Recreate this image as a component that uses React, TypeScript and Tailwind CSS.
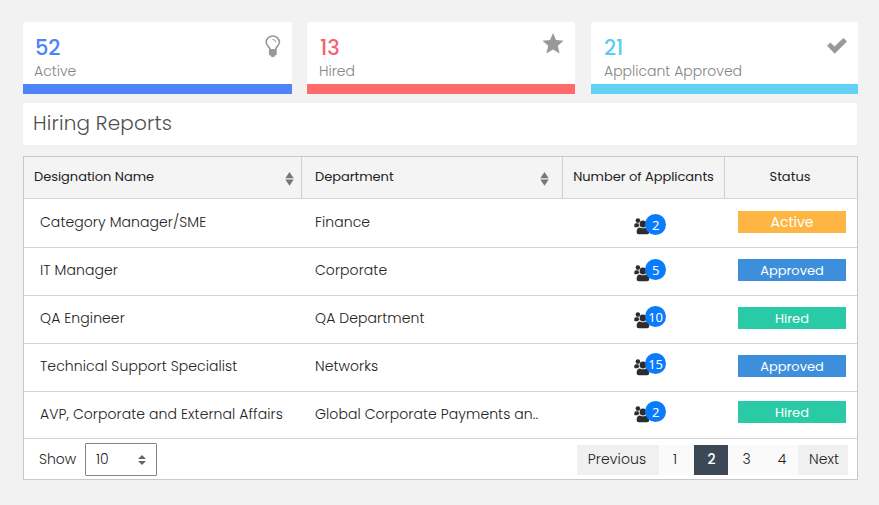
import React from "react";

const BulbIcon = () => (
  <svg width="16" height="23" viewBox="0 0 16 23" fill="none">
    <path d="M5.200 15C5.200 12 1.200 10.600 1.200 7.200a6.600 6.200 0 0 1 13.200 0C14.400 10.600 10.400 12 10.400 15Z" stroke="#999" strokeWidth="1.600" />
    <path d="M7.800 4.400q2.600.1 3 2.400" stroke="#999" strokeWidth="1" strokeLinecap="round" />
    <path d="M3.900 14.200h7.800v5.600l-1.700.7-.8 1.400H6.400l-.8-1.400-1.700-.7Z" fill="#999" />
  </svg>
);

const StarIcon = () => (
  <svg width="22" height="21" viewBox="0 0 22 21" fill="#999">
    <path d="M11 0 14 7.1 21.6 7.8 15.8 12.8 17.6 20.4 11 16.4 4.4 20.4 6.2 12.8.4 7.8 8 7.1Z" />
  </svg>
);

const CheckIcon = () => (
  <svg width="20" height="16" viewBox="0 0 20 16" fill="#999">
    <path d="M.3 7.8 3.4 4.8 7.5 8.7 16.4.2 19.8 3.4 7.7 15.4Z" stroke="#999" strokeWidth=".5" strokeLinejoin="round" />
  </svg>
);

const PeopleIcon = () => (
  <svg width="20" height="17" viewBox="0 0 20 17" fill="#2b2d30">
    <circle cx="3.9" cy="2.6" r="2.3" />
    <path d="M.3 8.5V7q0-1.700 1.600-1.700h2.400q.4 1.800 1.300 2.600-1.300.3-2.200 1.400H1.200Q.3 9.400.3 8.500Z" />
    <circle cx="9" cy="6" r="3.400" />
    <path d="M2.600 14.100q0-4.500 3.400-4.700 3 1.700 6 0 3.300.2 3.300 4.700 0 2.200-2.200 2.200H4.800q-2.200 0-2.200-2.200Z" />
  </svg>
);

const SortIcon = () => (
  <svg width="9" height="14" viewBox="0 0 9 14" fill="#777" className="mt-[15px] shrink-0">
    <path d="M4.500 0 8.700 6.200H.3ZM4.500 13.800.3 7.600H8.700Z" />
  </svg>
);

const stats = [
  { value: "52", label: "Active", card: "w-[269px] pl-[11px] border-[#4f83f8]", color: "text-[#4f83f8] pl-px", icon: <BulbIcon />, iconBox: "mt-[13px] mr-[11px]" },
  { value: "13", label: "Hired", card: "ml-[15px] w-[268px] pl-[12px] border-[#ff6b6b]", color: "text-[#f4646b] pl-px", icon: <StarIcon />, iconBox: "mt-[11px] mr-[11px]" },
  { value: "21", label: "Applicant Approved", card: "ml-4 w-[267px] pl-[13px] border-[#62d1f6]", color: "text-[#5ccdf3]", icon: <CheckIcon />, iconBox: "mt-4 mr-[11px]" },
];

const rows = [
  { name: "Category Manager/SME", dept: "Finance", count: "2", status: "Active", bg: "bg-[#fdb643] text-sm", row: "h-[49px] leading-[47px]", badge: "mt-3", icon: "mt-[19px]", dot: "-top-[4px]" },
  { name: "IT Manager", dept: "Corporate", count: "5", status: "Approved", bg: "bg-[#3d8fdc] text-[13px]", row: "h-12 leading-[45px]", badge: "mt-[11px]", icon: "mt-[17px]", dot: "-top-[6px]" },
  { name: "QA Engineer", dept: "QA Department", count: "10", status: "Hired", bg: "bg-[#28cba5] text-[13px]", row: "h-12 leading-[45px]", badge: "mt-[11px]", icon: "mt-4", dot: "-top-[6px]" },
  { name: "Technical Support Specialist", dept: "Networks", count: "15", status: "Approved", bg: "bg-[#3d8fdc] text-[13px]", row: "h-12 leading-[45px]", badge: "mt-[11px]", icon: "mt-[15px]", dot: "-top-[6px]" },
  { name: "AVP, Corporate and External Affairs", dept: "Global Corporate Payments an..", count: "2", status: "Hired", bg: "bg-[#28cba5] text-[13px]", row: "h-[47px] leading-[45px]", badge: "mt-[9px]", icon: "mt-[14px]", dot: "-top-[5px]" },
];

export default function App() {
  return (
    <div className="h-[505px] w-[879px] overflow-hidden bg-[#f2f2f2] pl-[23px] pt-[22px] font-['Poppins','Inter',sans-serif] font-light whitespace-nowrap text-[#222]">
      <div className="flex">
        {stats.map((s) => (
          <div key={s.label} className={`flex h-[72px] justify-between rounded-t-[2px] border-b-[10px] bg-white ${s.card}`}>
            <div className="pt-3">
              <div className={`text-[21px] leading-[28px] font-medium tracking-[-0.2px] ${s.color}`}>{s.value}</div>
              <div className="text-sm leading-[18px] text-[#858585]">{s.label}</div>
            </div>
            <div className={s.iconBox}>{s.icon}</div>
          </div>
        ))}
      </div>

      <div className="mt-[9px] h-[42px] w-[834px] rounded-[2px] bg-white pl-[10px] text-[20px] leading-[40px] tracking-[0.17px] text-[#505050]">Hiring Reports</div>

      <div className="mt-[11px] h-[324px] w-[835px] border border-[#c8c8c8] bg-white">
        <div className="flex h-[42px] border-b border-[#d4d4d4] bg-[#f4f4f4] text-[13px] leading-[39px] font-normal">
          <div className="flex w-[278px] items-start justify-between border-r border-[#cfcfcf] pr-[7px] pl-[10px] tracking-[-0.03px]">
            Designation Name
            <SortIcon />
          </div>
          <div className="flex w-[261px] items-start justify-between border-r border-[#cfcfcf] pr-[13px] pl-[13px] tracking-[-0.03px]">
            Department
            <SortIcon />
          </div>
          <div className="w-[162px] border-r border-[#cfcfcf] text-center tracking-[-0.03px]">Number of Applicants</div>
          <div className="w-[130px] text-center">Status</div>
        </div>

        {rows.map((r) => (
          <div key={r.name} className={`flex border-b border-[#d4d4d4] text-[14px] tracking-[0.08px] ${r.row}`}>
            <div className="w-[278px] pl-4">{r.name}</div>
            <div className="w-[261px] pl-[13px]">{r.dept}</div>
            <div className="w-[162px] pl-[71px]">
              <div className={`relative w-8 ${r.icon}`}>
                <PeopleIcon />
                <span className={`absolute left-[11px] flex size-[21px] items-center justify-center rounded-full bg-[#087cfb] pt-px font-['Noto_Sans',sans-serif] text-[13px] leading-none font-normal tracking-[-0.3px] text-white ${r.dot}`}>{r.count}</span>
              </div>
            </div>
            <div className="pl-[13px]">
              <div className={`h-[22px] w-[108px] text-center leading-[23px] font-normal tracking-normal text-white ${r.bg} ${r.badge}`}>{r.status}</div>
            </div>
          </div>
        ))}

        <div className="flex h-10 justify-between pr-[9px] pl-[15px] text-sm leading-10">
          <div className="flex">
            <span className="w-[46px]">Show</span>
            <div className="mt-1 flex h-[33px] w-[72px] items-center justify-between rounded-[1px] border border-[#858585] px-[10px]">
              <span className="pb-px">10</span>
              <svg width="8" height="10" viewBox="0 0 8 10" fill="#666">
                <path d="M4 0 8 4H0ZM4 10 0 6H8Z" />
              </svg>
            </div>
          </div>
          <div className="mt-[6px] flex h-[30px] bg-[#fafafa] text-center leading-[29px]">
            <span className="w-[82px] bg-[#f0f0f0] pr-[2px] tracking-[0.15px]">Previous</span>
            <span className="w-[35px] pr-[3px]">1</span>
            <span className="w-[34px] bg-[#3d4856] pl-px font-medium text-white">2</span>
            <span className="w-[35px] pl-[2px]">3</span>
            <span className="w-[35px] pl-[3px]">4</span>
            <span className="w-[50px] bg-[#f0f0f0] pl-[2px] tracking-[0.1px]">Next</span>
          </div>
        </div>
      </div>
    </div>
  );
}
